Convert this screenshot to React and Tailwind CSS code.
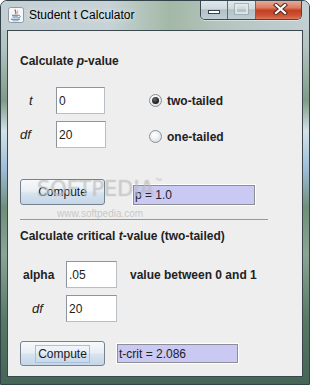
function JavaIcon() {
  return (
    <svg width="16" height="16" viewBox="0 0 16 16">
      <rect x="0.5" y="0.5" width="15" height="15" rx="2" fill="#f4f6f8" stroke="#8f9aa3" />
      <path d="M7.5 2.5 C6 4 9 5 7.5 7" stroke="#e0531d" strokeWidth="1.3" fill="none" />
      <path d="M9.5 3.5 C8.6 4.6 10.4 5.2 9.3 6.6" stroke="#f08a2a" strokeWidth="1" fill="none" />
      <path d="M4 8.3 H10.5" stroke="#4a78a8" strokeWidth="1.1" />
      <path d="M4.5 10 H10" stroke="#4a78a8" strokeWidth="1.1" />
      <path d="M10.5 8.3 C12.8 8.3 12.8 10.6 10.2 10.8" stroke="#4a78a8" strokeWidth="0.9" fill="none" />
      <path d="M3 12.2 H12" stroke="#4a78a8" strokeWidth="1.1" />
      <path d="M4.5 13.8 H10.5" stroke="#7aa0c4" strokeWidth="0.9" />
    </svg>
  );
}

function Field({ w, value }) {
  return (
    <div
      className={`${w} h-full bg-white border border-[#8c949e] border-b-[#b9bec4] border-r-[#b9bec4] flex items-center pl-[2px] text-[12px] text-[#222] font-['Liberation_Sans',Arial,sans-serif]`}
    >
      {value}
    </div>
  );
}

function ResultField({ w, h, value }) {
  return (
    <div
      className={`${w} ${h} bg-[#c9c9f3] border border-[#8d8d96] outline outline-1 outline-white flex items-center pl-[1px] text-[12px] text-[#222]`}
    >
      {value}
    </div>
  );
}

function Button({ h, focus }) {
  return (
    <div
      className={`w-[85px] ${h} rounded-[3px] border border-[#76838f] bg-[linear-gradient(180deg,#f7f9fb_0%,#e9eff5_45%,#d7e3ef_55%,#c4d6e8_100%)] flex items-center justify-center text-[12px] text-[#1a1a1a]`}
    >
      {focus ? (
        <span className="border border-[#a9c0d8] px-[2px] leading-[16px]">Compute</span>
      ) : (
        <span>Compute</span>
      )}
    </div>
  );
}

function Radio({ selected, label }) {
  return (
    <div className="h-[27px] flex items-center">
      <div className="w-[13px] h-[13px] rounded-full border border-[#8a8f96] bg-[radial-gradient(circle_at_40%_35%,#ffffff_0%,#eef1f4_45%,#c9d0d8_100%)] flex items-center justify-center">
        {selected && (
          <div className="w-[7px] h-[7px] rounded-full bg-[radial-gradient(circle_at_40%_35%,#6a6a6a_0%,#222_60%,#111_100%)]" />
        )}
      </div>
      <span className="ml-[5px] font-bold text-[12px] text-[#222]">{label}</span>
    </div>
  );
}

export default function App() {
  return (
    <div className="w-[310px] h-[385px] flex flex-col overflow-hidden rounded-t-[7px] border border-[#33434a] bg-[linear-gradient(180deg,#c4d1d6_0%,#b3c4c2_12%,#7f9b88_26%,#d3e2e8_34%,#9cbdd8_44%,#6f8f79_54%,#8aa596_66%,#567764_84%,#456657_100%)] font-['Liberation_Sans',Arial,sans-serif] relative">
      {/* title bar */}
      <div className="h-[29px] flex items-start shrink-0 bg-[linear-gradient(90deg,#c3cfd4_0%,#c7d3d7_35%,#a3b8a5_55%,#b3c4bd_70%,#c2cfd4_100%)]">
        <div className="ml-[7px] mt-[6px]">
          <JavaIcon />
        </div>
        <div className="ml-[5px] mt-[6px] leading-[16px] text-[12px] text-black [text-shadow:0_0_6px_rgba(255,255,255,0.95)]">
          Student t Calculator
        </div>
        <div className="ml-auto mr-[7px] -mt-px flex h-[20px] border border-t-0 border-[#3c4a52] rounded-b-[5px] overflow-hidden shadow-[0_1px_0_rgba(255,255,255,0.45)]">
          <div className="w-[27px] flex justify-center border-r border-[#5d6c73] bg-[linear-gradient(180deg,#e3eaed_0%,#cfdadf_45%,#b1c1c7_52%,#bfced3_100%)]">
            <div className="mt-[10px] w-[12px] h-[4px] bg-white border border-[#36434a]" />
          </div>
          <div className="w-[28px] flex justify-center border-r border-[#5d6c73] bg-[linear-gradient(180deg,#e3eaed_0%,#cfdadf_45%,#b1c1c7_52%,#bfced3_100%)]">
            <div className="mt-[4px] w-[13px] h-[10px] border-2 border-[#e4eaec] outline outline-1 outline-[#9aa8ae] opacity-80" />
          </div>
          <div className="w-[45px] flex items-center justify-center bg-[linear-gradient(180deg,#eab19f_0%,#dc7d63_40%,#c43f1f_55%,#cf5638_85%,#dc7a5e_100%)]">
            <svg width="15" height="12" viewBox="0 0 15 12" className="-mt-[1px] ml-[3px]">
              <path d="M3 2 L12 10 M12 2 L3 10" stroke="#4b2a22" strokeWidth="4.2" strokeLinecap="square" />
              <path d="M3 2 L12 10 M12 2 L3 10" stroke="#ffffff" strokeWidth="2.3" strokeLinecap="square" />
            </svg>
          </div>
        </div>
      </div>

      {/* client area */}
      <div className="mx-[6px] h-[347px] border border-[#3a474d] bg-[#eeeeee] relative">
        <div className="pl-[12px] text-[12px] text-[#222]">
          <div className="pt-[23px] font-bold leading-[14px]">
            Calculate <i>p</i>-value
          </div>

          <div className="mt-[19px] flex">
            <div className="flex flex-col gap-[7px]">
              <div className="flex items-center h-[27px]">
                <span className="w-[36px] pl-[9px] italic text-[13px]">t</span>
                <Field w="w-[49px]" value="0" />
              </div>
              <div className="flex items-center h-[27px]">
                <span className="w-[36px] italic text-[13px]">df</span>
                <Field w="w-[50px]" value="20" />
              </div>
            </div>
            <div className="ml-[43px] flex flex-col gap-[9px]">
              <Radio selected label="two-tailed" />
              <Radio label="one-tailed" />
            </div>
          </div>

          <div className="mt-[29px] flex items-start">
            <Button h="h-[26px]" />
            <div className="ml-[28px] mt-[6px]">
              <ResultField w="w-[122px]" h="h-[20px]" value="p = 1.0" />
            </div>
          </div>

          <div className="mt-[14px] w-[248px] h-px bg-[#7f9dc0]" />

          <div className="mt-[9px] font-bold leading-[14px]">
            Calculate critical <i>t</i>-value (two-tailed)
          </div>

          <div className="mt-[18px] flex items-center h-[27px]">
            <span className="w-[46px] pl-[3px] font-bold">alpha</span>
            <Field w="w-[51px]" value=".05" />
            <span className="ml-[13px] font-bold">value between 0 and 1</span>
          </div>
          <div className="mt-[7px] flex items-center h-[27px]">
            <span className="w-[46px] pl-[12px] italic text-[13px]">df</span>
            <Field w="w-[51px]" value="20" />
          </div>

          <div className="mt-[19px] flex items-start">
            <Button h="h-[25px]" focus />
            <div className="ml-[12px] mt-[3px]">
              <ResultField w="w-[121px]" h="h-[19px]" value="t-crit = 2.086" />
            </div>
          </div>
        </div>

        {/* watermark overlay */}
        <div className="absolute left-[29px] top-[145px] pointer-events-none flex items-start">
          <span className="text-[21px] text-[rgba(255,255,255,0.4)] [text-shadow:0_0_1px_rgba(110,110,110,0.55)] font-['DejaVu_Sans',sans-serif] leading-[26px]">
            SOFTPEDIA
          </span>
          <span className="ml-[1px] mt-[1px] text-[7px] leading-[8px] text-[rgba(150,150,150,0.5)]">™</span>
        </div>
        <div className="absolute left-[49px] top-[177px] pointer-events-none text-[10px] text-[rgba(160,160,160,0.5)] leading-[12px]">
          www.softpedia.com
        </div>
      </div>
    </div>
  );
}
